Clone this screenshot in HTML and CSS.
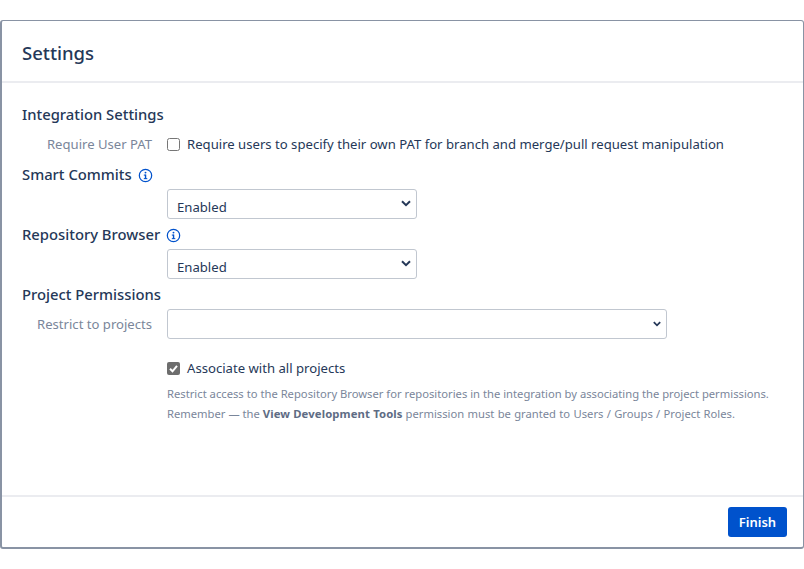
FILE: index.html
```html
<!DOCTYPE html>
<html lang="en">
<head>
<meta charset="utf-8">
<title>Settings</title>
<link rel="stylesheet" href="styles.css">
</head>
<body>
<div class="modal">
  <header class="modal-header"><h1>Settings</h1></header>
  <main class="modal-body">
    <h2>Integration Settings</h2>
    <div class="row row-check">
      <span class="label">Require User PAT</span>
      <label class="check"><input type="checkbox"><span>Require users to specify their own PAT for branch and merge/pull request manipulation</span></label>
    </div>
    <h2 class="with-icon">Smart Commits
      <svg class="info" viewBox="0 0 16 16" width="15" height="15"><circle cx="8" cy="8" r="6.6" fill="none" stroke="#0052cc" stroke-width="1.3"/><rect x="7.3" y="7" width="1.5" height="4.6" fill="#0052cc"/><rect x="6.2" y="7" width="2" height="1.1" fill="#0052cc"/><rect x="6.2" y="10.8" width="3.7" height="1.1" fill="#0052cc"/><circle cx="8" cy="4.9" r="1" fill="#0052cc"/></svg>
    </h2>
    <div class="row"><div class="select-box short"><span>Enabled</span><svg class="chev" viewBox="0 0 10 7" width="10" height="7"><path d="M1 1.2 5 5.2 9 1.2" fill="none" stroke="#253858" stroke-width="2"/></svg></div></div>
    <h2 class="with-icon">Repository Browser
      <svg class="info" viewBox="0 0 16 16" width="15" height="15"><circle cx="8" cy="8" r="6.6" fill="none" stroke="#0052cc" stroke-width="1.3"/><rect x="7.3" y="7" width="1.5" height="4.6" fill="#0052cc"/><rect x="6.2" y="7" width="2" height="1.1" fill="#0052cc"/><rect x="6.2" y="10.8" width="3.7" height="1.1" fill="#0052cc"/><circle cx="8" cy="4.9" r="1" fill="#0052cc"/></svg>
    </h2>
    <div class="row"><div class="select-box short"><span>Enabled</span><svg class="chev" viewBox="0 0 10 7" width="10" height="7"><path d="M1 1.2 5 5.2 9 1.2" fill="none" stroke="#253858" stroke-width="2"/></svg></div></div>
    <h2>Project Permissions</h2>
    <div class="row row-select">
      <span class="label">Restrict to projects</span>
      <div class="select-box long"><span></span><svg class="chev small" viewBox="0 0 10 7" width="8" height="6"><path d="M1 1.2 5 5.2 9 1.2" fill="none" stroke="#253858" stroke-width="2.2"/></svg></div>
    </div>
    <div class="row row-assoc">
      <label class="check"><span class="checked"><svg viewBox="0 0 13 13" width="13" height="13"><path d="M3 6.8 5.5 9.3 10 3.9" fill="none" stroke="#fff" stroke-width="2"/></svg></span><span>Associate with all projects</span></label>
    </div>
    <div class="row row-help">
      <p class="help">Restrict access to the Repository Browser for repositories in the integration by associating the project permissions.<br>Remember — the <b>View Development Tools</b> <span class="help-tail">permission must be granted to Users / Groups / Project Roles.</span></p>
    </div>
  </main>
  <footer class="modal-footer"><button type="button" class="finish">Finish</button></footer>
</div>
</body>
</html>
```
FILE: styles.css
```css
* { box-sizing: border-box; }
html, body { margin: 0; height: 569px; background: #fff; overflow: hidden; }
body { padding-top: 20px; font-family: "Noto Sans", "Open Sans", sans-serif; color: #172b4d; font-size: 13px; }
.modal {
  height: 529px;
  width: 804px;
  border: 1px solid #8993a4;
  border-left-width: 2px;
  border-bottom-width: 2px;
  border-radius: 3px;
  display: flex;
  flex-direction: column;
  background: #fff;
}
.modal-header { height: 62px; border-bottom: 2px solid #ebecf0; padding: 4px 20px 0; display: flex; align-items: center; }
h1 { margin: 0; font-size: 18.5px; font-weight: 500; line-height: 24px; color: #253858; }
.modal-body { flex: 1; padding: 22px 20px 0; }
h2 { margin: 0; font-size: 14.8px; font-weight: 500; line-height: 18px; color: #253858; height: 20px; }
.with-icon { display: flex; align-items: flex-start; gap: 6px; }
.info { flex: none; margin-top: 3px; }
.row { display: flex; padding-left: 145px; position: relative; }
.label { position: absolute; left: 0; width: 130px; text-align: right; color: #7a869a; font-size: 13.1px; line-height: 20px; }
.row-check { height: 20px; margin-top: 9px; margin-bottom: 11px; align-items: center; }
.check { display: flex; align-items: center; gap: 7px; font-size: 13.13px; line-height: 20px; color: #253858; }
.check input { margin: 0; width: 13px; height: 13px; flex: none; }
.select-box {
  height: 30px;
  border: 1px solid #c1c7d0;
  border-radius: 3px;
  display: flex;
  align-items: center;
  justify-content: space-between;
  padding: 6px 5px 0 9px;
  font-size: 13.13px;
  color: #253858;
  background: #fff;
  margin-top: 4px;
  margin-bottom: 6px;
}
.short { width: 250px; }
.long { width: 500px; margin: 0; padding-right: 5px; }
.chev { margin-top: -7px; }
.long .chev { margin-top: -6px; }
.row-select { margin-top: 4px; }
.row-select .label { top: 5px; }
.row-assoc { margin-top: 19px; height: 20px; }
.checked { width: 13px; height: 13px; background: #6d6d6d; border-radius: 2px; display: block; flex: none; }
.checked svg { display: block; }
.row-help { margin-top: 6px; }
.help { margin: 0; font-size: 11.22px; line-height: 20px; color: #7a869a; white-space: nowrap; }
.help b { font-weight: 700; font-size: 11.3px; color: #5e6c84; letter-spacing: 0.12px; }
.help-tail { word-spacing: 0.4px; }
.modal-footer { height: 52px; border-top: 2px solid #ebecf0; display: flex; justify-content: flex-end; align-items: flex-start; padding: 10px 16px 0 0; }
.finish { width: 59px; height: 30px; border: 0; border-radius: 3px; background: #0052cc; color: #fff; font: 600 13px "Noto Sans", sans-serif; padding: 0; }
```
